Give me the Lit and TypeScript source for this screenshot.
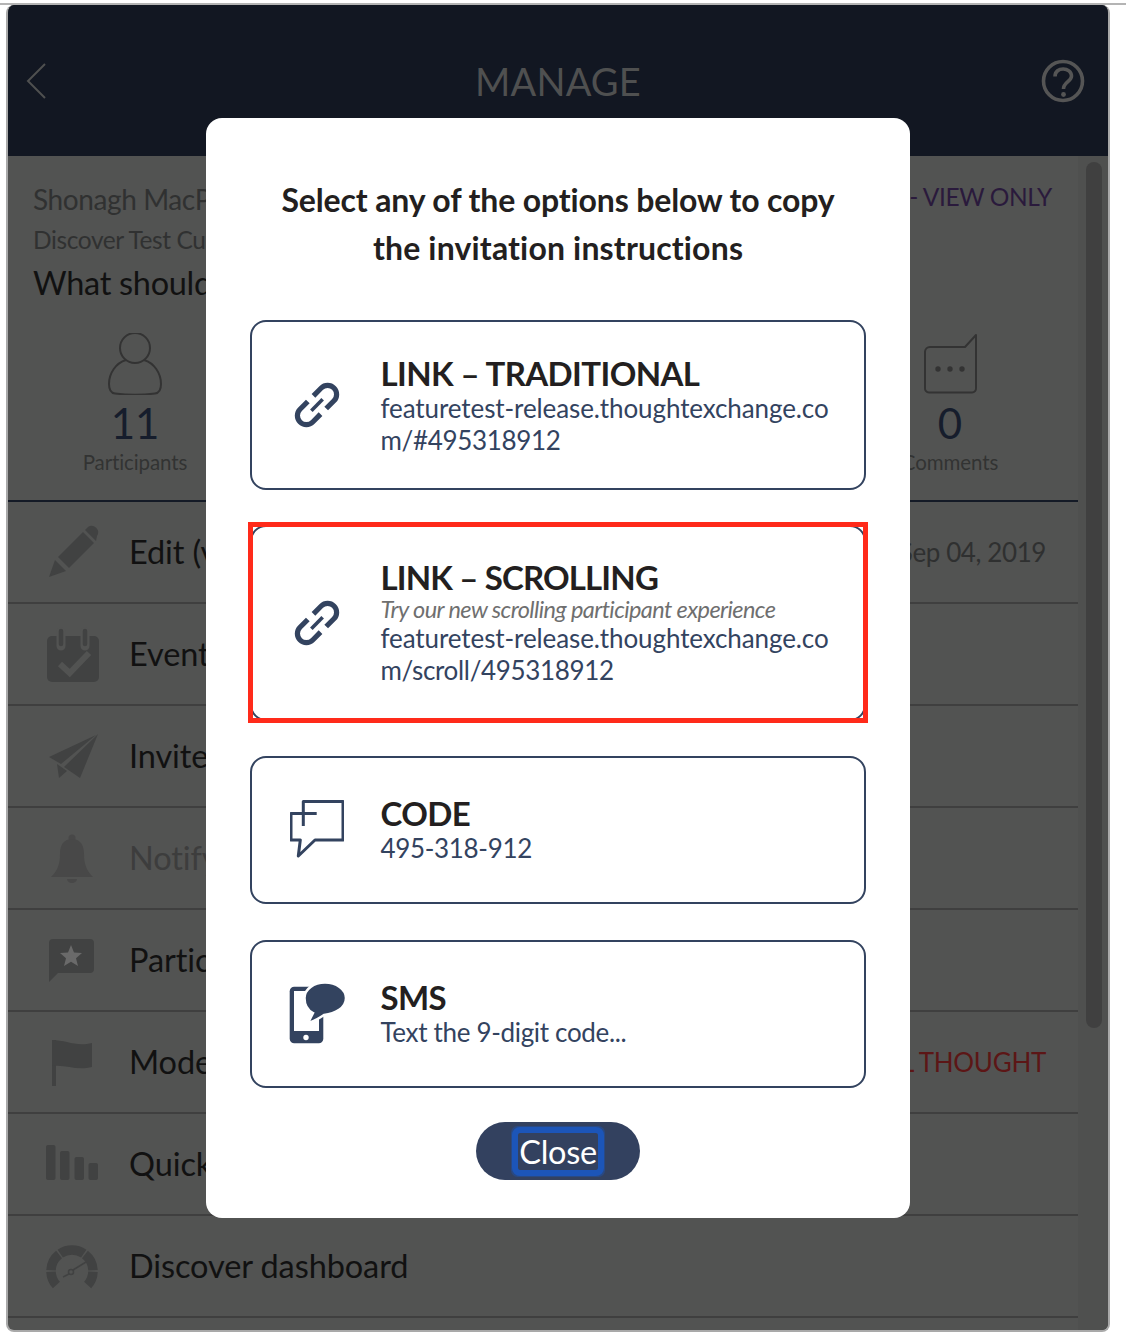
import { LitElement, html, css, svg } from "lit";
import { customElement } from "lit/decorators.js";

const arc = (a0: number, a1: number, r = 21, cx = 26, cy = 34) => {
  const p = (a: number) => {
    const t = (a * Math.PI) / 180;
    return `${(cx + r * Math.sin(t)).toFixed(2)} ${(cy - r * Math.cos(t)).toFixed(2)}`;
  };
  return `M${p(a0)} A${r} ${r} 0 0 1 ${p(a1)}`;
};

const rowIcons: Record<string, unknown> = {
  pencil: svg`<path d="M3 54 L9 37 L20 48 Z"/><path d="M12 34 L37 9 L48 20 L23 45 Z"/><path d="M39 7 L42 4 A6.5 6.5 0 0 1 51 13 L50 18 Z"/>`,
  calendar: svg`<rect x="1" y="11" width="52" height="46" rx="5"/>
    <path d="M15 7 V21 M39 7 V21" class="cut" stroke-width="9" stroke-linecap="round"/>
    <path d="M15 6 V19 M39 6 V19" class="ink" stroke-width="4.5" stroke-linecap="round"/>
    <path d="M14 39 L23.7 48 L43 28" class="cut" stroke-width="6"/>`,
  plane: svg`<path d="M3 30 L50 8 L15 37 Z"/><path d="M52 7 L34 51 L18 40 Z"/><path d="M11 37 L13 51 L21 44 Z"/>`,
  bell: svg`<g class="soft"><circle cx="26" cy="9" r="3.5"/><path d="M26 10 C35 10 38 17 38 25 C38 36 41 42 47 48 H5 C11 42 14 36 14 25 C14 17 17 10 26 10 Z"/><path d="M21 50 H31 A5 4 0 0 1 21 50 Z"/></g>`,
  star: svg`<path d="M7 8 H44 A4 4 0 0 1 48 12 V38 A4 4 0 0 1 44 42 H12 L3 51 V12 A4 4 0 0 1 7 8 Z"/>
    <path class="star" d="M25 14 L28 21.5 L36 22 L30 27.2 L32 35 L25 30.8 L18 35 L20 27.2 L14 22 L22 21.5 Z"/>`,
  flag: svg`<rect x="6" y="7" width="4" height="46"/><path d="M6 7 C20 7 30 14 46 10 V34 C30 38 20 31 6 33 Z"/>`,
  bars: svg`<rect x="0" y="10" width="9.5" height="35" rx="2"/><rect x="14" y="16" width="9.5" height="29" rx="2"/><rect x="28.5" y="22" width="9.5" height="23" rx="2"/><rect x="42.5" y="28" width="9.5" height="17" rx="2"/>`,
  gauge: svg`<g class="gauge"><path d=${arc(-132, -92)}/><path d=${arc(-88, -38)}/><path d=${arc(-34, 34)}/><path d=${arc(38, 88)}/><path d=${arc(92, 132)}/></g>
    <path d="M40 25 L27 33" class="ink" stroke-width="1.5"/><circle cx="25" cy="35" r="2.5" class="ink" stroke-width="1.5" fill="none"/><path d="M23 37 L17 40" class="ink" stroke-width="1.5"/>`,
};

const linkIcon = html`<svg class="card-icon" width="46" height="46" viewBox="0 0 46 46"><g transform="translate(23 23) rotate(-45)" fill="none" stroke="#33435f" stroke-width="5.2"><path d="M-4 -9 H-15 A9 9 0 0 0 -15 9 H-4"/><path d="M4 -9 H15 A9 9 0 0 1 15 9 H4"/><path d="M-8 0 H8" stroke-width="3.6"/></g></svg>`;
const codeIcon = html`<svg class="card-icon" width="54" height="60" viewBox="0 0 54 60"><path d="M13.3 26 V1.5 H53 V40 H25 L8.3 56 L10.3 40 H1 V13.5 H26.7" fill="none" stroke="#33435f" stroke-width="3" stroke-linejoin="round"/></svg>`;
const smsIcon = html`<svg class="card-icon sms" width="58" height="62" viewBox="0 0 58 62"><rect x="0.7" y="4.7" width="33.6" height="56.6" rx="4.5" fill="#33435f"/><rect x="5" y="9" width="25" height="40" fill="#fff"/><circle cx="17" cy="55.5" r="2.7" fill="#fff"/><g fill="#33435f" stroke="#fff" stroke-width="2.5"><path d="M19 41 L24 31 C18 28 15.5 22 15.5 16 C15.5 7 25 .5 36 .5 C47 .5 57 7 57 16 C57 26 46 32 35 33 C29 37 24 40 19 41 Z"/></g></svg>`;

@customElement("app-root")
export class AppRoot extends LitElement {
  static styles = css`
    :host { display: block; width: 1126px; height: 1334px; overflow: hidden; background: #fff; position: relative; font-family: Lato, "Open Sans", sans-serif; }
    * { box-sizing: border-box; }
    .page { height: 1334px; padding-top: 3px; display: flex; flex-direction: column; }
    .topline { height: 2px; flex: none; background: #b4b4b4; }
    .frame { margin-left: 6px; width: 1104px; height: 1327px; flex: none; display: flex; flex-direction: column; border: 2px solid #a9a9a9; border-top: 0; border-radius: 8px; overflow: hidden; background: #525352; }
    .head { height: 151px; flex: none; background: #121722; display: flex; align-items: center; justify-content: space-between; padding: 0 23px 0 18px; color: #4f5050; }
    .head .title { font-size: 38px; letter-spacing: 0.2px; line-height: 1; }
    .main { flex: 1; display: flex; min-height: 0; }
    .content { width: 1070px; flex: none; }
    .scroll { flex: 1; background: #4f504f; padding: 6px 6px 0 8px; }
    .thumb { width: 16px; height: 866px; border-radius: 8px; background: #404040; }
    .summary { height: 346px; border-bottom: 2px solid #141a26; padding: 24px 26px 0 25px; }
    .line-1 { display: flex; justify-content: space-between; height: 40px; align-items: center; }
    .name { font-size: 28px; color: #303131; letter-spacing: -0.4px; white-space: nowrap; margin-bottom: 2px; }
    .view { font-size: 24.5px; color: #2a1a3c; letter-spacing: -0.4px; white-space: nowrap; margin-bottom: 8px; }
    .org { font-size: 24.5px; line-height: 40px; color: #303131; letter-spacing: -0.4px; white-space: nowrap; }
    .question { font-size: 32.5px; line-height: 46px; color: #111; letter-spacing: -0.3px; white-space: nowrap; }
    .stats { display: flex; justify-content: space-between; padding: 27px 47px 0 47px; }
    .stat { width: 110px; display: flex; flex-direction: column; align-items: center; }
    .stat svg { display: block; height: 62px; }
    .num { font-size: 42px; line-height: 55px; margin-top: 1px; color: #161d2c; }
    .lbl { font-size: 20.5px; line-height: 24px; margin-top: -1px; color: #323333; letter-spacing: -0.1px; white-space: nowrap; }
    .row { height: 102px; border-bottom: 2px solid #3f3f3f; display: flex; align-items: center; padding: 0 32px 0 38px; }
    .row-icon { width: 54px; height: 60px; flex: none; fill: #414242; overflow: visible; margin-top: 2px; }
    .row-icon .cut { stroke: #525352; fill: none; }
    .row-icon .ink { stroke: #414242; fill: none; }
    .row-icon .star { fill: #6a6a6a; }
    .row-icon .soft { fill: #484848; }
    .row-icon .gauge path { fill: none; stroke: #414242; stroke-width: 9.5; }
    .row-label { margin-left: 29px; padding-bottom: 2px; font-size: 32.5px; color: #111; letter-spacing: -0.1px; white-space: nowrap; flex: 1; }
    .row-label.off { color: #3d3d3d; }
    .row-val { font-size: 26px; color: #2f3030; letter-spacing: -0.4px; white-space: nowrap; }
    .row-val.red { color: #5c1616; letter-spacing: -0.3px; }
    .modal { position: absolute; left: 206px; top: 118px; width: 704px; height: 1100px; background: #fff; border-radius: 16px; padding: 58px 44px 0; }
    .modal h2 { margin: 0 0 48px; font-size: 32px; font-weight: 700; line-height: 48px; text-align: center; color: #231f20; letter-spacing: -0.14px; }
    .modal h2 .wide { letter-spacing: 0.16px; }
    .cards { display: flex; flex-direction: column; gap: 36px; }
    .card { position: relative; display: flex; align-items: center; height: 148px; border: 2px solid #33435f; border-radius: 16px; padding: 0 30px 0 0; }
    .card.first { height: 170px; padding-top: 2px; }
    .card.second { height: 196px; margin: -1px 0; }
    .card.second .ctitle { letter-spacing: -0.85px; }
    .icon-cell { width: 128.5px; flex: none; display: flex; justify-content: center; padding: 0 1px 0 2px; }
    .card.first .icon-cell { margin-top: -2px; }
    .card-icon { display: block; }
    .card-icon.sms { margin: -2px 0 0 3px; }
    .ctitle { font-size: 33px; line-height: 34px; margin-bottom: 1px; font-weight: 700; color: #231f20; letter-spacing: -0.6px; }
    .csub { font-size: 26px; line-height: 32px; margin-top: 2px; color: #33435f; word-break: break-all; letter-spacing: -0.1px; }
    .csub .tight { letter-spacing: -0.33px; }
    .cnote { font-size: 23.5px; line-height: 24px; margin-top: 3px; font-style: italic; color: #6f6f6f; letter-spacing: -0.6px; white-space: nowrap; }
    .cnote + .csub { margin-top: 1px; }
    .mark { position: absolute; inset: -5px -4px -4px -4px; border: 5px solid #ff2a1a; pointer-events: none; }
    .foot { display: flex; justify-content: center; margin-top: 34px; }
    .close { width: 164px; height: 58px; border: 0; border-radius: 29px; background: #33415f; color: #fff; font: inherit; font-size: 32.5px; display: flex; align-items: center; justify-content: center; padding: 0; }
    .close span { display: block; width: 80px; height: 37px; line-height: 37px; text-align: center; outline: 6px solid #1c55b8; box-shadow: 0 0 0 7px rgba(28, 85, 184, 0.4); border-radius: 2px; letter-spacing: -0.3px; }
  `;

  private row(icon: string, label: string, val = "", opts: { off?: boolean; red?: boolean } = {}) {
    return html`<div class="row">
      <svg class="row-icon" viewBox="0 0 54 60">${rowIcons[icon]}</svg>
      <div class="row-label ${opts.off ? "off" : ""}">${label}</div>
      ${val ? html`<div class="row-val ${opts.red ? "red" : ""}">${val}</div>` : ""}
    </div>`;
  }

  render() {
    return html`<div class="page">
      <div class="topline"></div>
      <div class="frame">
        <div class="head">
          <svg width="49" height="36" viewBox="0 0 49 36"><path d="M19 1 L2 18 L19 35" fill="none" stroke="#4f5050" stroke-width="2"/></svg>
          <div class="title">MANAGE</div>
          <svg width="44" height="44" viewBox="0 0 44 44"><circle cx="22" cy="22" r="19.5" fill="none" stroke="#555" stroke-width="3.6"/><path d="M14 17.5 C14 7 30.5 8 30.5 17 C30.5 22.5 22.5 23 22.5 30" fill="none" stroke="#555" stroke-width="3.6"/><circle cx="22.5" cy="35.5" r="2.4" fill="#555"/></svg>
        </div>
        <div class="main">
          <div class="content">
            <div class="summary">
              <div class="line-1"><div class="name">Shonagh MacPherson</div><div class="view">CLOSED - VIEW ONLY</div></div>
              <div class="org">Discover Test Customer</div>
              <div class="question">What should we do next?</div>
              <div class="stats">
                <div class="stat">
                  <svg width="56" height="62" viewBox="0 0 56 62" fill="none" stroke="#333" stroke-width="2"><circle cx="28" cy="15" r="15"/><path d="M19 27 C9 30 2 40 2 51 C2 57 4 60 8 60.5 C20 62 36 62 48 60.5 C52 60 54 57 54 51 C54 40 47 30 37 27"/></svg>
                  <div class="num">11</div><div class="lbl">Participants</div>
                </div>
                <div class="stat">
                  <svg width="56" height="62" viewBox="0 0 56 62" fill="none" stroke="#333" stroke-width="2"><path d="M8 14 H43 L54 2 V55 A4 4 0 0 1 50 59.5 H7 A4 4 0 0 1 3 55 V19 A5 5 0 0 1 8 14 Z" stroke-linejoin="round"/><g fill="#333" stroke="none"><circle cx="16" cy="36" r="2.7"/><circle cx="28" cy="36" r="2.7"/><circle cx="40" cy="36" r="2.7"/></g></svg>
                  <div class="num">0</div><div class="lbl">Comments</div>
                </div>
              </div>
            </div>
            ${this.row("pencil", "Edit (view only)", "Closes Sep 04, 2019")}
            ${this.row("calendar", "Event dates")}
            ${this.row("plane", "Invite participants")}
            ${this.row("bell", "Notify participants", "", { off: true })}
            ${this.row("star", "Participant results")}
            ${this.row("flag", "Moderate", "1 INITIAL THOUGHT", { red: true })}
            ${this.row("bars", "Quick results")}
            ${this.row("gauge", "Discover dashboard")}
          </div>
          <div class="scroll"><div class="thumb"></div></div>
        </div>
      </div>
      <div class="modal">
        <h2>Select any of the options below to copy<br /><span class="wide">the invitation instructions</span></h2>
        <div class="cards">
          <div class="card first">
            <div class="icon-cell">${linkIcon}</div>
            <div><div class="ctitle">LINK – TRADITIONAL</div><div class="csub">featuretest-release.thoughtexchange.co<span class="tight">m/#495318912</span></div></div>
          </div>
          <div class="card second">
            <div class="icon-cell">${linkIcon}</div>
            <div><div class="ctitle">LINK – SCROLLING</div><div class="cnote">Try our new scrolling participant experience</div><div class="csub">featuretest-release.thoughtexchange.co<span class="tight">m/scroll/495318912</span></div></div>
            <div class="mark"></div>
          </div>
          <div class="card">
            <div class="icon-cell">${codeIcon}</div>
            <div><div class="ctitle">CODE</div><div class="csub"><span class="tight">495-318-912</span></div></div>
          </div>
          <div class="card">
            <div class="icon-cell">${smsIcon}</div>
            <div><div class="ctitle">SMS</div><div class="csub"><span class="tight">Text the 9-digit code...</span></div></div>
          </div>
        </div>
        <div class="foot"><button class="close"><span>Close</span></button></div>
      </div>
    </div>`;
  }
}
